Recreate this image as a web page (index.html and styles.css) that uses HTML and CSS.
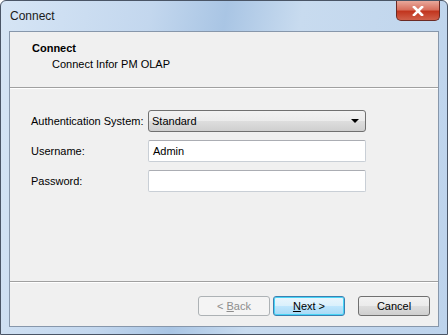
FILE: index.html
```html
<!DOCTYPE html>
<html lang="en">
<head>
  <meta charset="UTF-8" />
  <title>Connect</title>
  <link rel="stylesheet" href="styles.css">
</head>
<body>
  <div class="window">
    <div class="titlebar">
      <span class="title">Connect</span>
      <button class="close">
        <svg width="12" height="10" viewBox="0 0 12 10">
          <path d="M2 1 L10 9 M10 1 L2 9" stroke="#fff" stroke-width="2.6" stroke-linecap="square"/>
        </svg>
      </button>
    </div>

    <div class="client">
      <header class="head">
        <div class="head-title">Connect</div>
        <div class="head-sub">Connect Infor PM OLAP</div>
      </header>

      <main class="form">
        <div class="row">
          <label>Authentication System:</label>
          <div class="select">
            <span>Standard</span>
            <span class="arrow"></span>
          </div>
        </div>
        <div class="row">
          <label>Username:</label>
          <div class="input">Admin</div>
        </div>
        <div class="row">
          <label>Password:</label>
          <div class="input"></div>
        </div>
      </main>

      <footer class="buttons">
        <button class="btn disabled">&lt; <u>B</u>ack</button>
        <button class="btn default"><u>N</u>ext &gt;</button>
        <button class="btn cancel">Cancel</button>
      </footer>
    </div>
  </div>
</body>
</html>
```

FILE: styles.css
```css
body {
  margin: 0;
  padding: 0;
  background: #ffffff;
  font-family: "Liberation Sans", Arial, sans-serif;
  font-size: 11px;
  color: #000;
}
.window {
  width: 448px;
  height: 335px;
  box-sizing: border-box;
  border: 1px solid #4a5566;
  border-radius: 6px 6px 0 0;
  background: linear-gradient(100deg, #d6e5f5 0%, #c3d7ee 30%, #a9c5e4 45%, #c8dbef 60%, #bdd3ec 100%);
  padding: 0 8px 7px 8px;
  display: flex;
  flex-direction: column;
}
.titlebar {
  height: 30px;
  display: flex;
  justify-content: space-between;
  align-items: flex-start;
}
.title {
  margin-top: 8px;
  margin-left: 1px;
  font-size: 12px;
  color: #1a1a1a;
}
.close {
  width: 44px;
  height: 20px;
  margin-right: -1px;
  border: 1px solid #6b2a24;
  border-top: none;
  border-radius: 0 0 5px 5px;
  background: linear-gradient(#e9a89b 0%, #d8705e 45%, #c2361f 55%, #d0604a 100%);
  display: flex;
  align-items: center;
  justify-content: center;
  padding: 0;
}
.client {
  flex: 1;
  background: #f0f0f0;
  border: 1px solid #8797ab;
  display: flex;
  flex-direction: column;
}
.head {
  height: 56px;
  box-sizing: border-box;
  padding: 9px 0 0 22px;
  border-bottom: 1px solid #a0a0a0;
  box-shadow: 0 1px 0 #ffffff;
}
.head-title {
  font-weight: bold;
  line-height: 15px;
}
.head-sub {
  padding-left: 20px;
  line-height: 15px;
  margin-top: 1px;
}
.form {
  flex: 1;
  padding: 22px 0 0 21px;
  display: flex;
  flex-direction: column;
  gap: 8px;
}
.row {
  display: flex;
  align-items: center;
}
.row label {
  width: 117px;
  flex-shrink: 0;
  white-space: nowrap;
}
.select {
  width: 218px;
  height: 22px;
  box-sizing: border-box;
  border: 1px solid #707070;
  border-radius: 3px;
  background: linear-gradient(#f2f2f2 0%, #ebebeb 50%, #dddddd 51%, #cfcfcf 100%);
  display: flex;
  align-items: center;
  justify-content: space-between;
  padding: 0 6px 0 3px;
}
.arrow {
  width: 0;
  height: 0;
  border-left: 4px solid transparent;
  border-right: 4px solid transparent;
  border-top: 4px solid #000;
}
.input {
  width: 218px;
  height: 22px;
  box-sizing: border-box;
  border: 1px solid #c9cfd6;
  border-top-color: #abadb3;
  border-radius: 2px;
  background: #ffffff;
  padding: 2px 4px;
  line-height: 16px;
}
.buttons {
  height: 45px;
  box-sizing: border-box;
  border-top: 1px solid #a0a0a0;
  box-shadow: inset 0 1px 0 #ffffff;
  display: flex;
  justify-content: flex-end;
  align-items: flex-start;
  padding: 14px 8px 0 0;
}
.btn {
  width: 72px;
  height: 20px;
  box-sizing: border-box;
  border: 1px solid #707070;
  border-radius: 3px;
  background: linear-gradient(#f2f2f2 0%, #ebebeb 50%, #dddddd 51%, #cfcfcf 100%);
  font-family: inherit;
  font-size: 11px;
  padding: 0;
  color: #000;
}
.btn.disabled {
  border-color: #adb2b5;
  background: #f4f4f4;
  color: #8d8d8d;
}
.btn.default {
  margin-left: 3px;
  border-color: #3c7fb1;
  box-shadow: inset 0 0 0 1px #48d4f6;
  background: linear-gradient(#eaf6fd 0%, #d9f0fc 50%, #bee6fd 51%, #a7d9f5 100%);
}
.btn.cancel {
  margin-left: 13px;
}
```
